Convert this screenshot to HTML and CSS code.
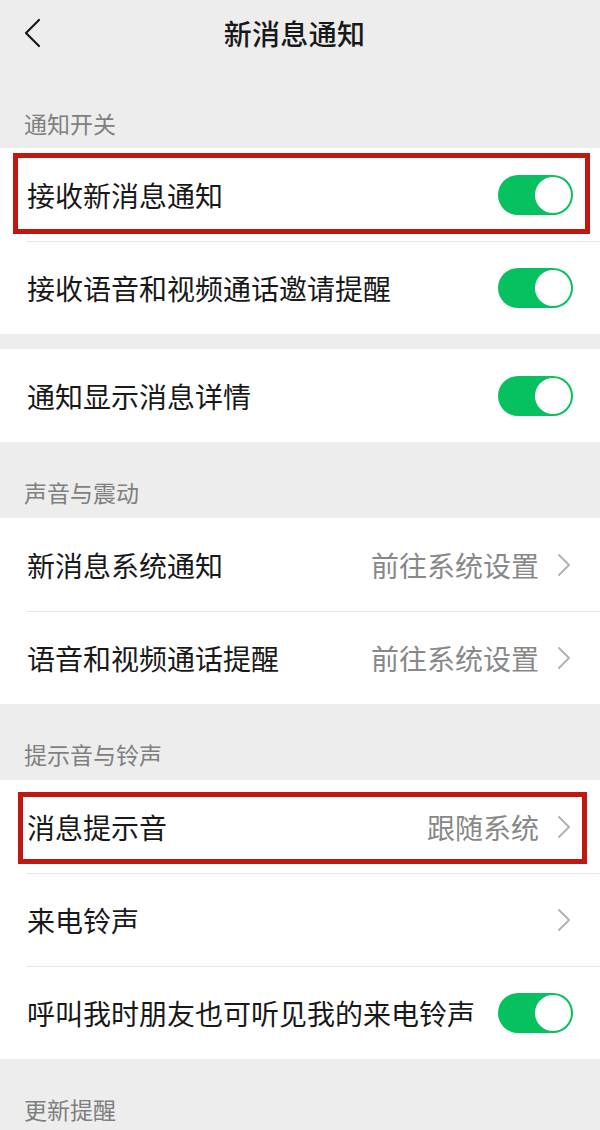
FILE: index.html
```html
<!DOCTYPE html>
<html lang="zh-CN">
<head>
<meta charset="utf-8">
<title>新消息通知</title>
<link rel="stylesheet" href="styles.css">
</head>
<body>
<div class="page">
  <header class="nav">
    <svg class="nav-back" width="20" height="30" viewBox="0 0 20 30"><path d="M16 2 L3 15 L16 28" fill="none" stroke="#1a1a1a" stroke-width="2.2" stroke-linecap="round" stroke-linejoin="round"/></svg>
    <h1 class="nav-title">新消息通知</h1>
  </header>

  <div class="section-title first">通知开关</div>
  <div class="group">
    <div class="row">
      <div class="row-inner">
        <span class="label">接收新消息通知</span>
        <span class="toggle"><span class="knob"></span></span>
      </div>
      <div class="mark mark-a"></div>
    </div>
    <div class="row">
      <div class="row-inner divided">
        <span class="label">接收语音和视频通话邀请提醒</span>
        <span class="toggle"><span class="knob"></span></span>
      </div>
    </div>
  </div>

  <div class="group spaced">
    <div class="row">
      <div class="row-inner">
        <span class="label">通知显示消息详情</span>
        <span class="toggle"><span class="knob"></span></span>
      </div>
    </div>
  </div>

  <div class="section-title">声音与震动</div>
  <div class="group">
    <div class="row">
      <div class="row-inner">
        <span class="label">新消息系统通知</span>
        <span class="value">前往系统设置</span>
        <svg class="chev" width="14" height="24" viewBox="0 0 14 24"><path d="M2 2 L12 12 L2 22" fill="none" stroke="#b3b3b3" stroke-width="2" stroke-linecap="round" stroke-linejoin="round"/></svg>
      </div>
    </div>
    <div class="row">
      <div class="row-inner divided">
        <span class="label">语音和视频通话提醒</span>
        <span class="value">前往系统设置</span>
        <svg class="chev" width="14" height="24" viewBox="0 0 14 24"><path d="M2 2 L12 12 L2 22" fill="none" stroke="#b3b3b3" stroke-width="2" stroke-linecap="round" stroke-linejoin="round"/></svg>
      </div>
    </div>
  </div>

  <div class="section-title">提示音与铃声</div>
  <div class="group">
    <div class="row">
      <div class="row-inner">
        <span class="label">消息提示音</span>
        <span class="value">跟随系统</span>
        <svg class="chev" width="14" height="24" viewBox="0 0 14 24"><path d="M2 2 L12 12 L2 22" fill="none" stroke="#b3b3b3" stroke-width="2" stroke-linecap="round" stroke-linejoin="round"/></svg>
      </div>
      <div class="mark mark-b"></div>
    </div>
    <div class="row">
      <div class="row-inner divided">
        <span class="label">来电铃声</span>
        <span class="value"></span>
        <svg class="chev" width="14" height="24" viewBox="0 0 14 24"><path d="M2 2 L12 12 L2 22" fill="none" stroke="#b3b3b3" stroke-width="2" stroke-linecap="round" stroke-linejoin="round"/></svg>
      </div>
    </div>
    <div class="row">
      <div class="row-inner divided">
        <span class="label">呼叫我时朋友也可听见我的来电铃声</span>
        <span class="toggle"><span class="knob"></span></span>
      </div>
    </div>
  </div>

  <div class="section-title">更新提醒</div>
</div>
</body>
</html>
```
FILE: styles.css
```css
* { box-sizing: border-box; }

html, body {
  margin: 0;
  padding: 0;
  background: #ededed;
}

body {
  font-family: "Noto Sans CJK SC", "Noto Sans", sans-serif;
  color: #191919;
  width: 600px;
  height: 1130px;
  overflow: hidden;
}

.page {
  display: flex;
  flex-direction: column;
}

.nav {
  height: 66px;
  display: flex;
  align-items: center;
  padding-left: 23px;
  position: relative;
}

.nav-back {
  display: block;
  margin-top: -1px;
}

.nav-title {
  margin: 0;
  flex: 1;
  text-align: center;
  font-size: 28px;
  font-weight: 500;
  line-height: 34px;
  color: #191919;
  padding-right: 54px;
  letter-spacing: 0.3px;
}

.section-title {
  height: 76px;
  padding: 38px 0 0 24px;
  font-size: 23px;
  line-height: 24px;
  color: #7f7f7f;
}

.section-title.first {
  height: 82px;
  padding-top: 45px;
}

.group {
  background: #ffffff;
  display: flex;
  flex-direction: column;
}

.group.spaced {
  margin-top: 15px;
}

.row {
  position: relative;
  padding-left: 27px;
}

.row-inner {
  height: 93px;
  display: flex;
  align-items: center;
  padding-right: 27px;
}

.row-inner.divided {
  border-top: 1px solid #e5e5e5;
}

.label {
  flex: 1;
  font-size: 28px;
  line-height: 34px;
  color: #191919;
  white-space: nowrap;
}

.value {
  font-size: 28px;
  line-height: 34px;
  color: #888888;
  margin-right: 18px;
}

.chev {
  display: block;
  margin-right: 2px;
}

.toggle {
  width: 75px;
  height: 40px;
  border-radius: 20px;
  background: #07c160;
  display: flex;
  align-items: center;
  justify-content: flex-end;
  padding-right: 2px;
  flex-shrink: 0;
}

.knob {
  width: 36px;
  height: 36px;
  border-radius: 50%;
  background: #ffffff;
}

/* red annotation boxes overlaying the rows */
.mark {
  position: absolute;
  border: 5px solid #c0170f;
  pointer-events: none;
}

.mark-a {
  top: 5px;
  left: 13px;
  right: 10px;
  bottom: 7px;
}

.mark-b {
  top: 12px;
  left: 18px;
  right: 13px;
  bottom: 9px;
}
```
